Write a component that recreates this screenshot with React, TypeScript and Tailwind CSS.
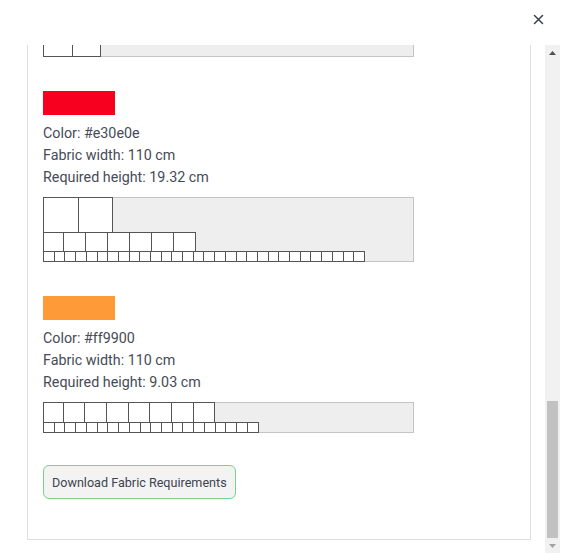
import React, { useLayoutEffect, useRef } from "react";

type Row = { h: number; cells: number[] };

const rep = (n: number, w: number) => Array.from({ length: n }, () => w);

type Fabric = { color: string; swatch: string; height: string; rows: Row[] };

const fabrics: Fabric[] = [
  { color: "#1f3a93", swatch: "#1f3a93", height: "21.50", rows: [{ h: 34.5, cells: rep(4, 34.5) }, { h: 22, cells: rep(6, 22) }, { h: 16, cells: rep(10, 16) }] },
  { color: "#2e7d32", swatch: "#2e7d32", height: "29.06", rows: [{ h: 44, cells: rep(3, 44) }, { h: 34.5, cells: rep(5, 34.5) }, { h: 19.5, cells: rep(8, 19.5) }] },
  { color: "#000000", swatch: "#000000", height: "13.05", rows: [{ h: 22, cells: rep(9, 22) }, { h: 22, cells: rep(4, 22) }] },
  { color: "#ffd700", swatch: "#ffd700", height: "32.62", rows: [{ h: 50, cells: rep(2, 50) }, { h: 34.5, cells: rep(6, 34.5) }, { h: 25.5, cells: rep(5, 25.5) }] },
  { color: "#7b1fa2", swatch: "#7b1fa2", height: "16.01", rows: [{ h: 30, cells: rep(7, 30) }, { h: 24, cells: rep(4, 24) }] },
  { color: "#1e90ff", swatch: "#1e90ff", height: "15.57", rows: [{ h: 24, cells: rep(5, 24) }, { h: 28.5, cells: rep(2, 28.5) }] },
  { color: "#e30e0e", swatch: "#f70020", height: "19.32", rows: [{ h: 34.5, cells: rep(2, 34.5) }, { h: 19.8, cells: [19.5, ...rep(6, 22)] }, { h: 10.7, cells: rep(30, 10.7) }] },
  { color: "#ff9900", swatch: "#ff9a38", height: "9.03", rows: [{ h: 19.5, cells: [19.5, ...rep(7, 21.7)] }, { h: 11, cells: rep(20, 10.73) }] },
];

function Diagram({ rows }: { rows: Row[] }) {
  const total = rows.reduce((s, r) => s + r.h, 0);
  const H = Math.round(total);
  const rects: React.ReactElement[] = [];
  let y = 0;
  rows.forEach((r, ri) => {
    let x = 0;
    const y0 = Math.round(y);
    const y1 = Math.min(Math.round(y + r.h), H - 1);
    r.cells.forEach((w, ci) => {
      const x0 = Math.round(x);
      const x1 = Math.round(x + w);
      rects.push(
        <rect key={`${ri}-${ci}`} x={x0 + 0.5} y={y0 + 0.5} width={x1 - x0} height={y1 - y0} fill="#ffffff" stroke="#555555" strokeWidth={1} />
      );
      x += w;
    });
    y += r.h;
  });
  return (
    <svg width={371} height={H} className="block" viewBox={`0 0 371 ${H}`} shapeRendering="crispEdges">
      <rect x={0.5} y={0.5} width={370} height={H - 1} fill="#eeeeee" stroke="#c4c4c4" strokeWidth={1} />
      {rects}
    </svg>
  );
}

function FakeScrollbar() {
  return (
    <div className="w-[15px] h-[508px] bg-[#f1f1f1] flex flex-col shrink-0">
      <div className="h-[15px] flex items-center justify-center">
        <svg width="7" height="4" viewBox="0 0 7 4"><path d="M0 4 3.5 0 7 4Z" fill="#505050" /></svg>
      </div>
      <div className="flex-1 flex flex-col justify-end items-center">
        <div className="w-[11px] h-[137px] bg-[#c1c1c1]" />
      </div>
      <div className="h-[15px] flex items-center justify-center">
        <svg width="7" height="4" viewBox="0 0 7 4"><path d="M0 0 7 0 3.5 4Z" fill="#a3a3a3" /></svg>
      </div>
    </div>
  );
}

export default function App() {
  const ref = useRef<HTMLDivElement>(null);
  useLayoutEffect(() => {
    if (ref.current) ref.current.scrollTop = ref.current.scrollHeight;
  }, []);
  return (
    <div className="w-[572px] h-[553px] bg-white overflow-hidden" style={{ fontFamily: "Roboto, 'Noto Sans', sans-serif" }}>
      <div className="h-[45px] flex justify-end items-start pt-[9px] pr-[24px]">
        <button className="w-5 h-5 flex items-center justify-center text-[#3a3f48]" aria-label="Close">
          <svg width="11" height="11" viewBox="0 0 11 11" fill="none" stroke="currentColor" strokeWidth="1.5" strokeLinecap="round">
            <path d="M1.5 1.5 9.5 9.5M9.5 1.5 1.5 9.5" />
          </svg>
        </button>
      </div>
      <div className="flex ml-[12px] mr-[12px] h-[508px]">
        <div ref={ref} className="flex-1 h-[508px] overflow-hidden pt-[15px] pl-[15px] pr-[14px] pb-[13px]">
          <div className="border border-[#dcdee3] bg-white pt-[15px] px-[15px] pb-[40px]">
            {fabrics.map((f, i) => (
              <div key={i} className={i === fabrics.length - 1 ? "mb-[32px]" : "mb-[34px]"}>
                <div className="w-[72px] h-[24px] mb-[7px]" style={{ backgroundColor: f.swatch }} />
                <div className="text-[14.3px] leading-[22px] text-[#464b57]">
                  <div>Color: {f.color}</div>
                  <div>Fabric width: 110 cm</div>
                  <div>Required height: {f.height} cm</div>
                </div>
                <div className="mt-[9px]">
                  <Diagram rows={f.rows} />
                </div>
              </div>
            ))}
            <button className="h-[34px] px-[8px] pt-[2px] bg-[#f3f3f3] border border-[#7ccf8d] rounded-[6px] text-[12.6px] text-[#3d4350]">
              Download Fabric Requirements
            </button>
          </div>
        </div>
        <FakeScrollbar />
      </div>
    </div>
  );
}
